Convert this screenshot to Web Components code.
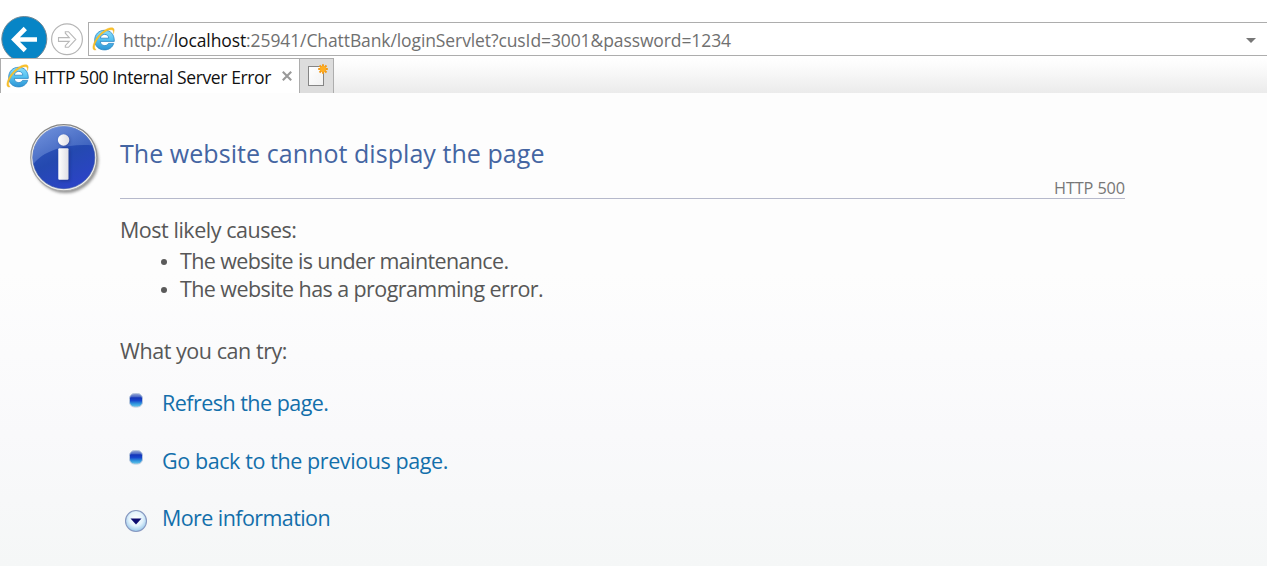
<!DOCTYPE html>
<html lang="en">
<head>
<meta charset="utf-8">
<title>HTTP 500 Internal Server Error</title>
<style>
html,body{margin:0;height:100%;overflow:hidden;background:#fff}
body{font-family:"Open Sans","Noto Sans",sans-serif}
</style>
</head>
<body>
<browser-window></browser-window>
<script>
const define = (name, html) => customElements.define(name, class extends HTMLElement {
  constructor() {
    super();
    this.attachShadow({ mode: 'open' }).innerHTML = html;
  }
});

// A line of text whose letter spacing is tuned to fill the given width.
customElements.define('fit-text', class extends HTMLElement {
  connectedCallback() {
    if (this.shadowRoot) return;
    const root = this.attachShadow({ mode: 'open' });
    root.innerHTML = '<style>:host{display:block;white-space:nowrap;flex:none}span{display:inline-block}</style><span><slot></slot></span>';
    const span = root.querySelector('span');
    const w = +this.getAttribute('w');
    const fit = () => {
      span.style.letterSpacing = '0px';
      const n = this.textContent.length;
      const gap = (w - span.getBoundingClientRect().width) / n;
      span.style.letterSpacing = gap + 'px';
      this.style.width = w + 'px';
    };
    fit();
    requestAnimationFrame(fit);
  }
});

define('ie-logo', `<style>:host{display:block;flex:none;width:24px;height:24px}svg{display:block;width:100%;height:100%}</style>
<svg viewBox="0 0 24 24"><defs><linearGradient id="b" x1="0" y1="0" x2="0" y2="1"><stop offset="0" stop-color="#8bdcfa"/><stop offset=".5" stop-color="#54c1f0"/><stop offset="1" stop-color="#2d94d4"/></linearGradient></defs>
<path d="M22.3 14.4H8.3c.2 2.6 1.9 4.2 4.4 4.2 1.9 0 3-.8 3.8-2.2h5.2c-1.3 4-4.6 6.5-9.2 6.5-5.9 0-9.8-4-9.8-9.7 0-5.8 4-9.9 9.9-9.9 6.2 0 9.8 4.2 9.7 11.1zM8.4 11.2h8.4c-.2-2.3-1.8-3.8-4.1-3.8-2.4 0-4 1.500-4.300 3.800z" fill="url(#b)" stroke="#2c86c4" stroke-width=".8"/>
<path d="M4.200 22.800C.2 24.300-.2 19.500 3 13.500 7 6.200 15.500-.1 20.300.8c2.400.5 2.200 3.200 1 5.900.4-2.200.2-3.600-1.500-3.900C15.500 2.200 8.500 7.300 5 13.200c-2.600 4.400-3.300 8-.8 9.600z" fill="#fbc42c" stroke="#eaa713" stroke-width=".35"/></svg>`);

define('nav-buttons', `<style>:host{display:block;width:88px;height:42px;flex:none;overflow:hidden}svg{display:block}</style>
<svg width="88" height="46" viewBox="0 16 88 46">
<circle cx="24.300" cy="39" r="22.500" fill="#0785c6" stroke="#6f8795" stroke-width="1"/>
<path d="M37 39.500H15M25.300 28.500L14.300 39.500L25.300 50.500" fill="none" stroke="#fff" stroke-width="4.600"/>
<circle cx="67" cy="39.300" r="15.400" fill="#fff" stroke="#b5b5b5" stroke-width="1.200"/>
<path d="M58.500 37.600H69.300L65.300 33.200V31.700H68.500L75.800 39.500L68.500 47.300H65.300V45.700L69.300 41.400H58.500Z" fill="#fff" stroke="#b8b8b8" stroke-width="1.100"/></svg>`);

define('address-bar', `<style>
:host{display:flex;height:58px;padding-top:16px;box-sizing:border-box;background:#fff}
.box{flex:1;margin-top:6px;height:34px;box-sizing:border-box;border:1px solid #adadad;border-right:0;display:flex;align-items:center;padding-left:3px}
fit-text{font-size:17.500px;line-height:32px;margin-left:7px;color:#707070;padding-top:1px}
b{font-weight:400;color:#111}
.arr{margin-left:auto;margin-right:11px;margin-top:3px}
</style><nav-buttons></nav-buttons><div class="box"><ie-logo></ie-logo><fit-text w="608">http://<b>localhost</b>:25941/ChattBank/loginServlet?cusId=3001&amp;password=1234</fit-text>
<svg class="arr" width="10" height="5"><path d="M0 0H10L5 5Z" fill="#777"/></svg></div>`);

define('tab-strip', `<style>
:host{display:flex;height:35px;background:linear-gradient(#fff,#fbfbfb 25%,#ebebeb)}
.tab{width:300px;height:35px;box-sizing:border-box;border:1px solid #adadad;border-bottom:0;background:#fff;display:flex;align-items:center;padding-left:5px}
fit-text{font-size:17.500px;line-height:34px;color:#111;margin-left:4px;padding-top:1px}
.x{margin-left:11px;margin-top:0}
.new{width:34px;height:35px;box-sizing:border-box;border:solid #adadad;border-width:1px 1px 0 0;background:#ddd}
.new svg{display:block}
</style><div class="tab"><ie-logo></ie-logo><fit-text w="237">HTTP 500 Internal Server Error</fit-text>
<svg class="x" width="10" height="10"><path d="M.8.8L9.200 9.200M9.200.8L.8 9.200" stroke="#999" stroke-width="2.100"/></svg></div>
<div class="new"><svg width="33" height="34" viewBox="300 59 33 34"><defs><linearGradient id="p" x2="1" y2="1"><stop stop-color="#fff"/><stop offset="1" stop-color="#f1f1f1"/></linearGradient></defs>
<rect x="308.500" y="66.500" width="15" height="19" fill="url(#p)" stroke="#858585"/>
<g stroke="#f39a16" stroke-width="1.900"><path d="M323 64.200V73.800M318.200 69H327.800M319.500 65.500L326.500 72.500M326.500 65.500L319.500 72.500"/></g><circle cx="323" cy="69" r="2.900" fill="#ffae22"/></svg></div>`);

define('info-icon', `<style>:host{display:block;width:76px;height:76px}svg{display:block}</style>
<svg width="76" height="76" viewBox="26 121 76 76"><defs>
<linearGradient id="f" x1=".2" y1="0" x2=".7" y2="1"><stop stop-color="#345cc0"/><stop offset=".5" stop-color="#2449b0"/><stop offset="1" stop-color="#2c43c8"/></linearGradient>
<linearGradient id="g" x1="0" y1="0" x2=".8" y2="1"><stop stop-color="#89a8e8"/><stop offset="1" stop-color="#365cba"/></linearGradient>
<linearGradient id="i" x2="1"><stop stop-color="#fff"/><stop offset="1" stop-color="#dedee4"/></linearGradient>
<linearGradient id="r" x2="0" y2="1"><stop stop-color="#858585"/><stop offset="1" stop-color="#aaa"/></linearGradient>
<filter id="s" x="-20%" y="-20%" width="140%" height="140%"><feGaussianBlur stdDeviation="1.500"/></filter></defs>
<circle cx="65.500" cy="160" r="33" fill="#555" opacity=".65" filter="url(#s)"/>
<circle cx="63.800" cy="157.700" r="33.100" fill="#eeeeec" stroke="url(#r)" stroke-width="1.200"/>
<circle cx="63.800" cy="157.700" r="31" fill="url(#f)" stroke="#3450a5" stroke-width=".6"/>
<path d="M33.500 164A31 31 0 0 1 92.500 145.500C82 144.500 68 145 55 149.500 45 153 38 158 33.500 164Z" fill="url(#g)" opacity=".75"/>
<g fill="#142c7c" opacity=".55" filter="url(#s)"><circle cx="64.500" cy="141" r="5.500"/><rect x="59.500" y="149" width="10.500" height="32"/></g>
<circle cx="63.600" cy="140" r="5.700" fill="url(#i)"/><rect x="58.300" y="148.300" width="10.200" height="31.500" rx="1" fill="url(#i)"/></svg>`);

define('bullet-dot', `<style>:host{display:block;width:14px;height:15px}svg{display:block}</style>
<svg width="14" height="15"><defs><linearGradient id="d" x2="0" y2="1"><stop stop-color="#99a8d4"/><stop offset=".22" stop-color="#5270c8"/><stop offset=".32" stop-color="#1435b8"/><stop offset=".52" stop-color="#1746cc"/><stop offset=".75" stop-color="#2f93dc"/><stop offset="1" stop-color="#69cdea"/></linearGradient></defs>
<rect x=".5" y=".5" width="13" height="13.500" rx="5" fill="url(#d)" stroke="#b6c6dc" stroke-width="1"/></svg>`);

define('expand-icon', `<style>:host{display:block;width:24px;height:24px}svg{display:block}</style>
<svg width="24" height="24"><defs><radialGradient id="e" cx=".5" cy=".4" r=".6"><stop stop-color="#fff"/><stop offset=".55" stop-color="#e4f3fc"/><stop offset="1" stop-color="#94c6ea"/></radialGradient></defs>
<circle cx="12" cy="12" r="10.500" fill="url(#e)" stroke="#8798c0" stroke-width="1.100"/><path d="M6.500 9.500H17.500L12 15.500Z" fill="#0c0c70"/></svg>`);

define('cause-item', `<style>:host{display:flex;align-items:center;height:28px;padding-left:41px}
i{width:6px;height:6px;border-radius:50%;background:#5a5a5a;margin-right:13px;margin-top:2px}</style><i></i><slot></slot>`);

define('action-row', `<style>:host{display:grid;grid-template-columns:42px 1fr;height:57.500px;color:#136fab}
.ic{display:flex;justify-content:center;width:32px;padding-top:var(--top,10px)}</style><div class="ic"><slot name="icon"></slot></div><slot></slot>`);

define('error-page', `<style>
:host{display:grid;grid-template-columns:94px 1005px;column-gap:0;height:473px;box-sizing:border-box;padding-left:26px;background:linear-gradient(#fdfdfd,#fdfdfd 38%,#f9f9fb 72%,#f5f7f7);color:#575757;font-size:21.500px;line-height:28px}
info-icon{margin-top:28px}
header{height:106px;box-sizing:border-box;border-bottom:1px solid #b6b9cb;padding-top:43px}
.title{font-size:25px;line-height:34px;color:#4465a2}
.code{font-size:16.300px;line-height:20px;color:#777;margin-left:auto;margin-top:8px}
.m{margin-top:17px}
.list{margin-top:3px}
.try{margin-top:34px}
.actions{margin-top:24px}
</style><info-icon></info-icon><main>
<header><fit-text class="title" w="424.500">The website cannot display the page</fit-text><fit-text class="code" w="71">HTTP 500</fit-text></header>
<fit-text class="m" w="176.500">Most likely causes:</fit-text>
<div class="list"><cause-item><fit-text w="328.500">The website is under maintenance.</fit-text></cause-item><cause-item><fit-text w="363">The website has a programming error.</fit-text></cause-item></div>
<fit-text class="try" w="167">What you can try:</fit-text>
<div class="actions">
<action-row style="--top:3.500px"><bullet-dot slot="icon"></bullet-dot><fit-text w="166.500">Refresh the page.</fit-text></action-row>
<action-row style="--top:3px"><bullet-dot slot="icon"></bullet-dot><fit-text w="286">Go back to the previous page.</fit-text></action-row>
<action-row style="--top:5px"><expand-icon slot="icon"></expand-icon><fit-text w="168">More information</fit-text></action-row>
</div></main>`);

define('browser-window', `<style>:host{display:block;height:566px;overflow:hidden}</style><address-bar></address-bar><tab-strip></tab-strip><error-page></error-page>`);
</script>
</body>
</html>
